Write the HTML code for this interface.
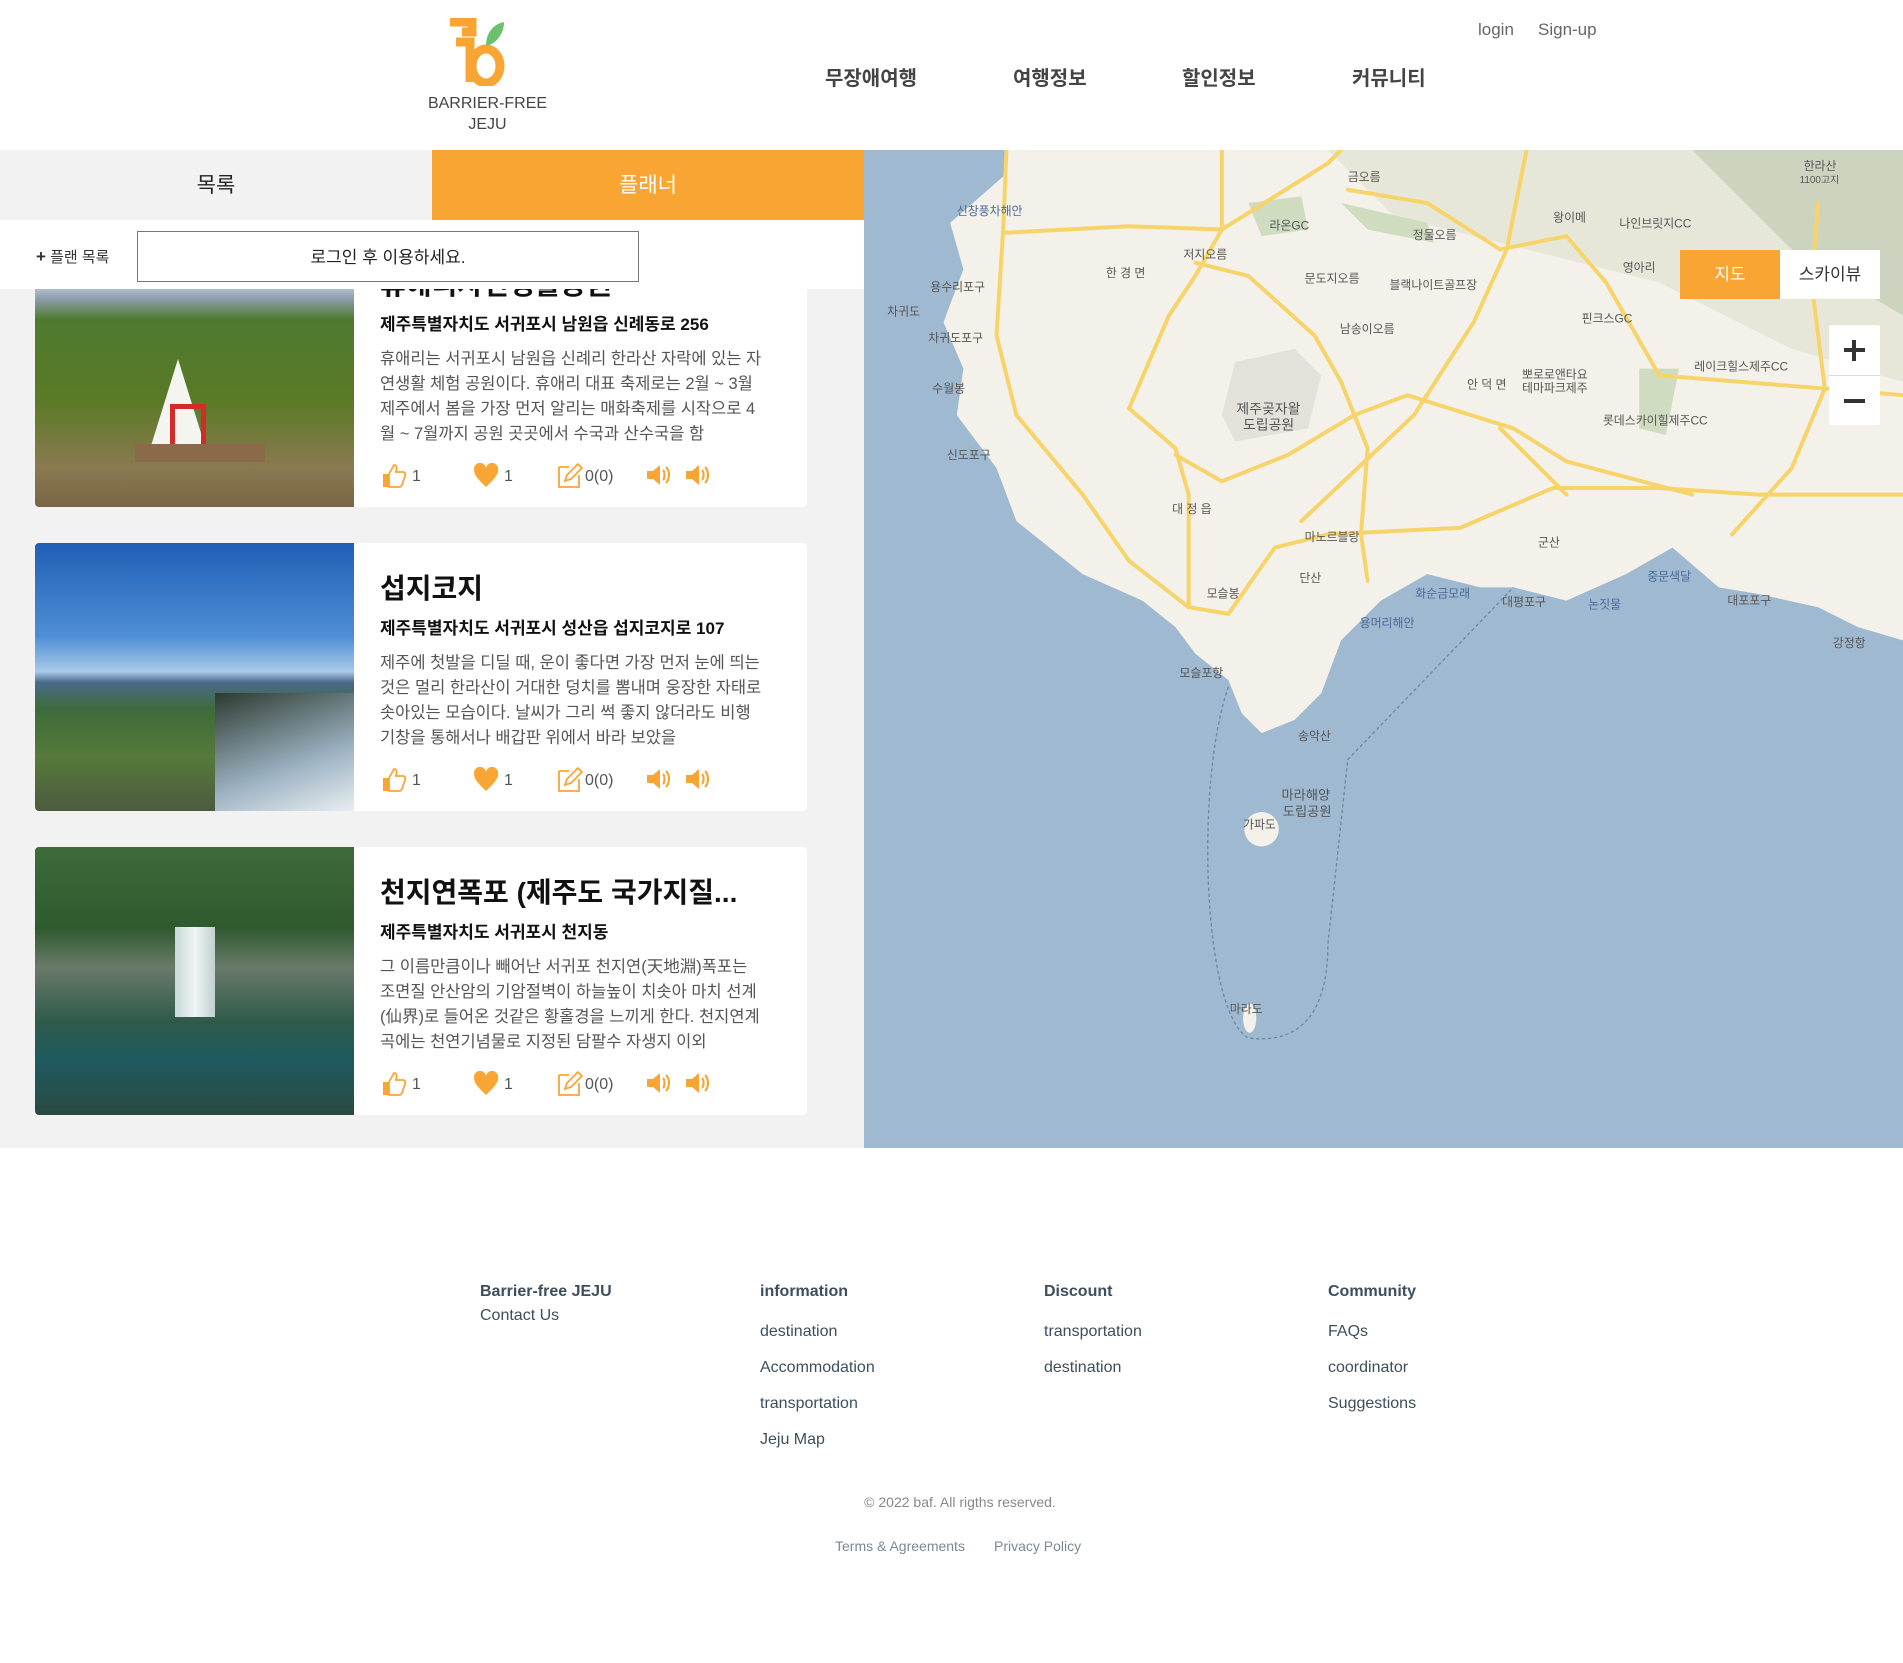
<!DOCTYPE html>
<html><head><meta charset="utf-8">
<style>
*{margin:0;padding:0;box-sizing:border-box}
body{width:1903px;height:1663px;background:#fff;font-family:"Liberation Sans","Noto Sans CJK KR",sans-serif;position:relative;overflow:hidden;color:#222}
.a{position:absolute}
.nav{font-size:20px;font-weight:bold;color:#444;top:62px}
.card{position:absolute;left:35px;width:772px;height:268px;background:#fff;border-radius:4px;overflow:hidden}
.card .img{position:absolute;left:0;top:0;width:319px;height:268px}
.card .t{position:absolute;left:345px;top:24px;font-size:28px;font-weight:bold;color:#111;white-space:nowrap}
.card .ad{position:absolute;left:345px;top:71px;font-size:17px;font-weight:bold;color:#111}
.card .d{position:absolute;left:345px;top:108px;width:382px;font-size:16.5px;line-height:25px;color:#555;height:100px;overflow:hidden}
.card .ic{position:absolute;left:345px;top:222px;height:28px;width:400px;font-size:16px;color:#555}
.ic span{position:absolute;top:7px}
.ic svg{position:absolute;top:0}
.ft{font-size:16px;color:#3d4f5c}
.fh{font-weight:bold}
</style></head><body>
<!-- header -->
<svg class="a" style="left:448px;top:18px" width="66" height="68" viewBox="0 0 66 68">
<path d="M2 4 H24 V14 H14 M8 24 H22 V64" fill="none" stroke="#f9a533" stroke-width="9"/>
<ellipse cx="38" cy="48" rx="14" ry="17" fill="none" stroke="#f9a533" stroke-width="9"/>
<path d="M38 28 C38 14 46 6 56 4 C56 16 48 26 38 28Z" fill="#6cc26c"/>
</svg>
<div class="a" style="left:400px;top:93px;width:175px;text-align:center;font-size:16px;color:#444;line-height:21px">BARRIER-FREE<br>JEJU</div>
<div class="a" style="left:1478px;top:20px;font-size:17px;color:#666">login</div>
<div class="a" style="left:1538px;top:20px;font-size:17px;color:#666">Sign-up</div>
<div class="a nav" style="left:825px">무장애여행</div>
<div class="a nav" style="left:1013px">여행정보</div>
<div class="a nav" style="left:1182px">할인정보</div>
<div class="a nav" style="left:1352px">커뮤니티</div>

<!-- left panel -->
<div class="a" style="left:0;top:150px;width:864px;height:998px;background:#f2f2f2"></div>
<div class="a" style="left:0;top:150px;width:432px;height:70px;background:#f2f2f2;text-align:center;line-height:72px;font-size:21px;color:#222">목록</div>
<div class="a" style="left:432px;top:150px;width:432px;height:70px;background:#f9a533;text-align:center;line-height:72px;font-size:21px;color:#fff">플래너</div>

<div class="a" style="left:0;top:289px;width:864px;height:859px;overflow:hidden">
 <div class="card" style="top:-50px">
  <div class="img" style="background:linear-gradient(180deg,#8fb6e0 0%,#dbe6f2 14%,#8fa0b0 22%,#4e7a30 30%,#5a7a25 60%,#8a7a50 85%,#7a6545 100%)"></div>
  <div class="a" style="left:115px;top:120px;width:0;height:0;border-left:28px solid transparent;border-right:28px solid transparent;border-bottom:90px solid #f4f4f0"></div>
  <div class="a" style="left:135px;top:165px;width:36px;height:50px;border:5px solid #d32a2a"></div>
  <div class="a" style="left:100px;top:205px;width:130px;height:18px;background:#8a6a4a"></div>
  <div class="t">휴애리자연생활공원</div>
  <div class="ad">제주특별자치도 서귀포시 남원읍 신례동로 256</div>
  <div class="d">휴애리는 서귀포시 남원읍 신례리 한라산 자락에 있는 자연생활 체험 공원이다. 휴애리 대표 축제로는 2월 ~ 3월 제주에서 봄을 가장 먼저 알리는 매화축제를 시작으로 4월 ~ 7월까지 공원 곳곳에서 수국과 산수국을 함</div>
  <div class="ic">ICONS</div>
 </div>
 <div class="card" style="top:254px">
  <div class="img" style="background:linear-gradient(180deg,#1f5fb5 0%,#4f8fd6 35%,#a9c9e8 48%,#4b6a8a 52%,#3d6b3a 62%,#567a3a 80%,#4d5a40 100%)"></div>
  <div class="a" style="left:180px;top:150px;width:139px;height:118px;background:linear-gradient(160deg,#2d3a30,#9ab0c0 60%,#e8eef2)"></div>
  <div class="t">섭지코지</div>
  <div class="ad">제주특별자치도 서귀포시 성산읍 섭지코지로 107</div>
  <div class="d">제주에 첫발을 디딜 때, 운이 좋다면 가장 먼저 눈에 띄는 것은 멀리 한라산이 거대한 덩치를 뽐내며 웅장한 자태로 솟아있는 모습이다. 날씨가 그리 썩 좋지 않더라도 비행기창을 통해서나 배갑판 위에서 바라 보았을</div>
  <div class="ic">ICONS</div>
 </div>
 <div class="card" style="top:558px">
  <div class="img" style="background:linear-gradient(180deg,#3f6a3a 0%,#2e5a2e 30%,#6a7a6a 45%,#2f5a4a 65%,#1e5a60 80%,#2a4a40 100%)"></div>
  <div class="a" style="left:140px;top:80px;width:40px;height:90px;background:linear-gradient(90deg,#c8d8d8,#f0f4f4,#c0d0d0)"></div>
  <div class="t">천지연폭포 (제주도 국가지질...</div>
  <div class="ad">제주특별자치도 서귀포시 천지동</div>
  <div class="d">그 이름만큼이나 빼어난 서귀포 천지연(天地淵)폭포는 조면질 안산암의 기암절벽이 하늘높이 치솟아 마치 선계(仙界)로 들어온 것같은 황홀경을 느끼게 한다. 천지연계곡에는 천연기념물로 지정된 담팔수 자생지 이외</div>
  <div class="ic">ICONS</div>
 </div>
</div>
<div class="a" style="left:0;top:220px;width:864px;height:69px;background:#fff"></div>
<div class="a" style="left:36px;top:246px;font-size:15px;color:#333"><b style="font-size:17px">+</b> 플랜 목록</div>
<div class="a" style="left:137px;top:231px;width:502px;height:51px;border:1px solid #777;background:#fff;text-align:center;line-height:51px;font-size:17px;color:#222">로그인 후 이용하세요.</div>

<!-- map -->
<svg class="a" style="left:864px;top:150px" width="1039" height="998" viewBox="0 0 1568 1506" preserveAspectRatio="none">
<rect width="1568" height="1506" fill="#9fb9d1"/>
<path d="M215 0 L210 40 L130 110 L150 180 L120 260 L150 330 L140 400 L200 480 L230 560 L330 640 L420 680 L470 720 L500 760 L550 800 L570 850 L600 880 L650 860 L690 820 L720 740 L780 680 L850 640 L930 660 L980 660 L1060 680 L1150 640 L1220 600 L1290 660 L1350 670 L1440 690 L1500 720 L1568 740 L1568 0 Z" fill="#f3f1ea"/>
<path d="M700 0 L1568 0 L1568 350 L1400 300 L1200 200 L1000 150 L800 100 Z" fill="#dfe3d2" opacity=".7"/>
<path d="M1250 0 L1568 0 L1568 250 L1400 150 Z" fill="#c6d0b8" opacity=".8"/>
<path d="M720 80 L850 110 L860 140 L760 120 Z M580 80 L660 70 L670 120 L600 130 Z M1170 330 L1230 330 L1210 430 L1170 420 Z" fill="#cfdcc0"/>
<path d="M560 320 L650 300 L690 340 L670 420 L560 440 L540 400 Z" fill="#e3e1da"/>
<ellipse cx="600" cy="1025" rx="26" ry="26" fill="#f3f1ea"/>
<ellipse cx="582" cy="1310" rx="10" ry="22" fill="#f3f1ea"/>
<g fill="none" stroke="#f7d46a" stroke-width="6" stroke-linecap="round">
<path d="M215 0 L210 120 L200 280 L230 400 L330 520 L400 620 L490 690 L550 700 L620 600 L700 580 L900 570 L1040 510 L1200 510 L1350 520 L1568 520"/>
<path d="M210 125 L400 115 L540 120 L700 20 L720 0"/>
<path d="M540 0 L540 120 L500 190 L460 250 L400 390 L470 450 L490 520 L490 690"/>
<path d="M500 170 L580 190 L680 280 L720 350 L740 400 L760 450 L750 580 L760 650"/>
<path d="M470 460 L540 500 L640 460 L740 400 L820 370 L980 420 L1060 470 L1250 520"/>
<path d="M960 420 L1040 500 L1060 520"/>
<path d="M1000 0 L970 150 L920 260 L830 400 L660 560"/>
<path d="M730 60 L850 80 L960 150 L1060 130 L1120 200 L1200 340 L1450 360 L1568 370"/>
<path d="M1440 80 L1430 200 L1450 360 L1400 480 L1310 580"/>
</g>
<path d="M550 810 C500 950 510 1300 580 1340 C660 1350 700 1300 700 1200 L730 920 L980 660" fill="none" stroke="#6f87a0" stroke-width="2" stroke-dasharray="5 4"/>
<g font-family="Liberation Sans, Noto Sans CJK KR, sans-serif" font-size="18" fill="#555">
<text x="140" y="98" fill="#4a6a9a">신창풍차해안</text><text x="365" y="192">한 경 면</text><text x="482" y="164">저지오름</text>
<text x="100" y="213">용수리포구</text><text x="35" y="250">차귀도</text><text x="97" y="290">차귀도포구</text><text x="103" y="366">수월봉</text>
<text x="125" y="466">신도포구</text><text x="612" y="120">라온GC</text><text x="730" y="47">금오름</text><text x="828" y="134">정물오름</text>
<text x="665" y="200">문도지오름</text><text x="793" y="210">블랙나이트골프장</text><text x="718" y="276">남송이오름</text>
<text x="562" y="398" font-size="21">제주곶자왈</text><text x="572" y="422" font-size="21">도립공원</text>
<text x="910" y="360">안 덕 면</text><text x="993" y="345">뽀로로앤타요</text><text x="993" y="365">테마파크제주</text>
<text x="1040" y="108">왕이메</text><text x="1140" y="117">나인브릿지CC</text><text x="1145" y="183">영아리</text><text x="1083" y="260">핀크스GC</text>
<text x="1253" y="333">레이크힐스제주CC</text><text x="1115" y="414">롯데스카이힐제주CC</text><text x="465" y="548">대 정 읍</text>
<text x="665" y="590">마노르블랑</text><text x="657" y="652">단산</text><text x="517" y="675">모슬봉</text><text x="1017" y="598">군산</text>
<text x="832" y="675" fill="#4a6a9a">화순금모래</text><text x="748" y="720" fill="#4a6a9a">용머리해안</text><text x="963" y="688">대평포구</text>
<text x="1093" y="692" fill="#4a6a9a">논짓물</text><text x="1182" y="650" fill="#4a6a9a">중문색달</text><text x="1303" y="686">대포포구</text>
<text x="1462" y="750">강정항</text><text x="476" y="795">모슬포항</text><text x="655" y="890">송악산</text>
<text x="630" y="980" font-size="20">마라해양</text><text x="632" y="1005" font-size="20">도립공원</text><text x="572" y="1024">가파도</text>
<text x="552" y="1302">마라도</text><text x="1418" y="30">한라산</text><text x="1412" y="50" font-size="15">1100고지</text>
<text x="112" y="1555" font-size="22" fill="#222">2km</text><text x="173" y="1552" font-size="16" fill="#222">kakao</text>
</g>
<path d="M16 1540 V1550 H108 V1540" fill="none" stroke="#222" stroke-width="3"/>
</svg>
<div class="a" style="left:1680px;top:250px;width:100px;height:49px;background:#f9a533;color:#fff;text-align:center;line-height:49px;font-size:17px">지도</div>
<div class="a" style="left:1780px;top:250px;width:100px;height:49px;background:#fff;color:#333;text-align:center;line-height:49px;font-size:17px">스카이뷰</div>
<div class="a" style="left:1829px;top:325px;width:51px;height:100px;background:#fff;border-radius:2px"></div>
<div class="a" style="left:1829px;top:375px;width:51px;height:1px;background:#ddd"></div>
<div class="a" style="left:1844px;top:348px;width:21px;height:4px;background:#333"></div>
<div class="a" style="left:1852px;top:340px;width:4px;height:21px;background:#333"></div>
<div class="a" style="left:1844px;top:399px;width:21px;height:4px;background:#333"></div>

<!-- footer -->
<div class="a ft fh" style="left:480px;top:1283px">Barrier-free JEJU</div>
<div class="a ft" style="left:480px;top:1307px">Contact Us</div>
<div class="a ft fh" style="left:760px;top:1283px">information</div>
<div class="a ft" style="left:760px;top:1323px">destination</div>
<div class="a ft" style="left:760px;top:1359px">Accommodation</div>
<div class="a ft" style="left:760px;top:1395px">transportation</div>
<div class="a ft" style="left:760px;top:1431px">Jeju Map</div>
<div class="a ft fh" style="left:1044px;top:1283px">Discount</div>
<div class="a ft" style="left:1044px;top:1323px">transportation</div>
<div class="a ft" style="left:1044px;top:1359px">destination</div>
<div class="a ft fh" style="left:1328px;top:1283px">Community</div>
<div class="a ft" style="left:1328px;top:1323px">FAQs</div>
<div class="a ft" style="left:1328px;top:1359px">coordinator</div>
<div class="a ft" style="left:1328px;top:1395px">Suggestions</div>
<div class="a" style="left:0;width:1920px;top:1494px;text-align:center;font-size:14px;color:#888">© 2022 baf. All rigths reserved.</div>
<div class="a" style="left:835px;top:1538px;font-size:14px;color:#7a8a95">Terms &amp; Agreements</div>
<div class="a" style="left:994px;top:1538px;font-size:14px;color:#7a8a95">Privacy Policy</div>

<script>
var sp='<path d="M2 10h6l7-6v20l-7-6H2z" fill="#f9a533"/><path d="M18 9c2 2 2 8 0 10M21 6c4 4 4 12 0 16" fill="none" stroke="#f9a533" stroke-width="2.2"/>';
var ic='<svg style="left:0" width="28" height="28" viewBox="0 0 28 28"><path d="M3 13h6v13H3z" fill="#f9a533"/><path d="M9 13l5-9c3 0 3 3 2 7h7c2 0 3 2 2 4l-3 9c-1 2-2 2-3 2H9z" fill="#fff" stroke="#f9a533" stroke-width="1.8"/></svg><span style="left:32px">1</span>'+
'<svg style="left:92px" width="28" height="28" viewBox="0 0 28 28"><path d="M14 26C8 20 2 15 2 9a6 6 0 0 1 12-2 6 6 0 0 1 12 2c0 6-6 11-12 17z" fill="#f9a533"/></svg><span style="left:124px">1</span>'+
'<svg style="left:175px" width="28" height="28" viewBox="0 0 28 28"><path d="M4 6h10M4 6v20h20V14" fill="none" stroke="#f9a533" stroke-width="1.8"/><path d="M10 20l2-6 11-11 4 4-11 11z" fill="none" stroke="#f9a533" stroke-width="1.8"/></svg><span style="left:205px">0(0)</span>'+
'<svg style="left:265px" width="28" height="28" viewBox="0 0 28 28">'+sp+'</svg>'+
'<svg style="left:304px" width="28" height="28" viewBox="0 0 28 28">'+sp+'</svg>';
document.querySelectorAll('.ic').forEach(function(e){e.innerHTML=ic});
</script>
</body></html>
